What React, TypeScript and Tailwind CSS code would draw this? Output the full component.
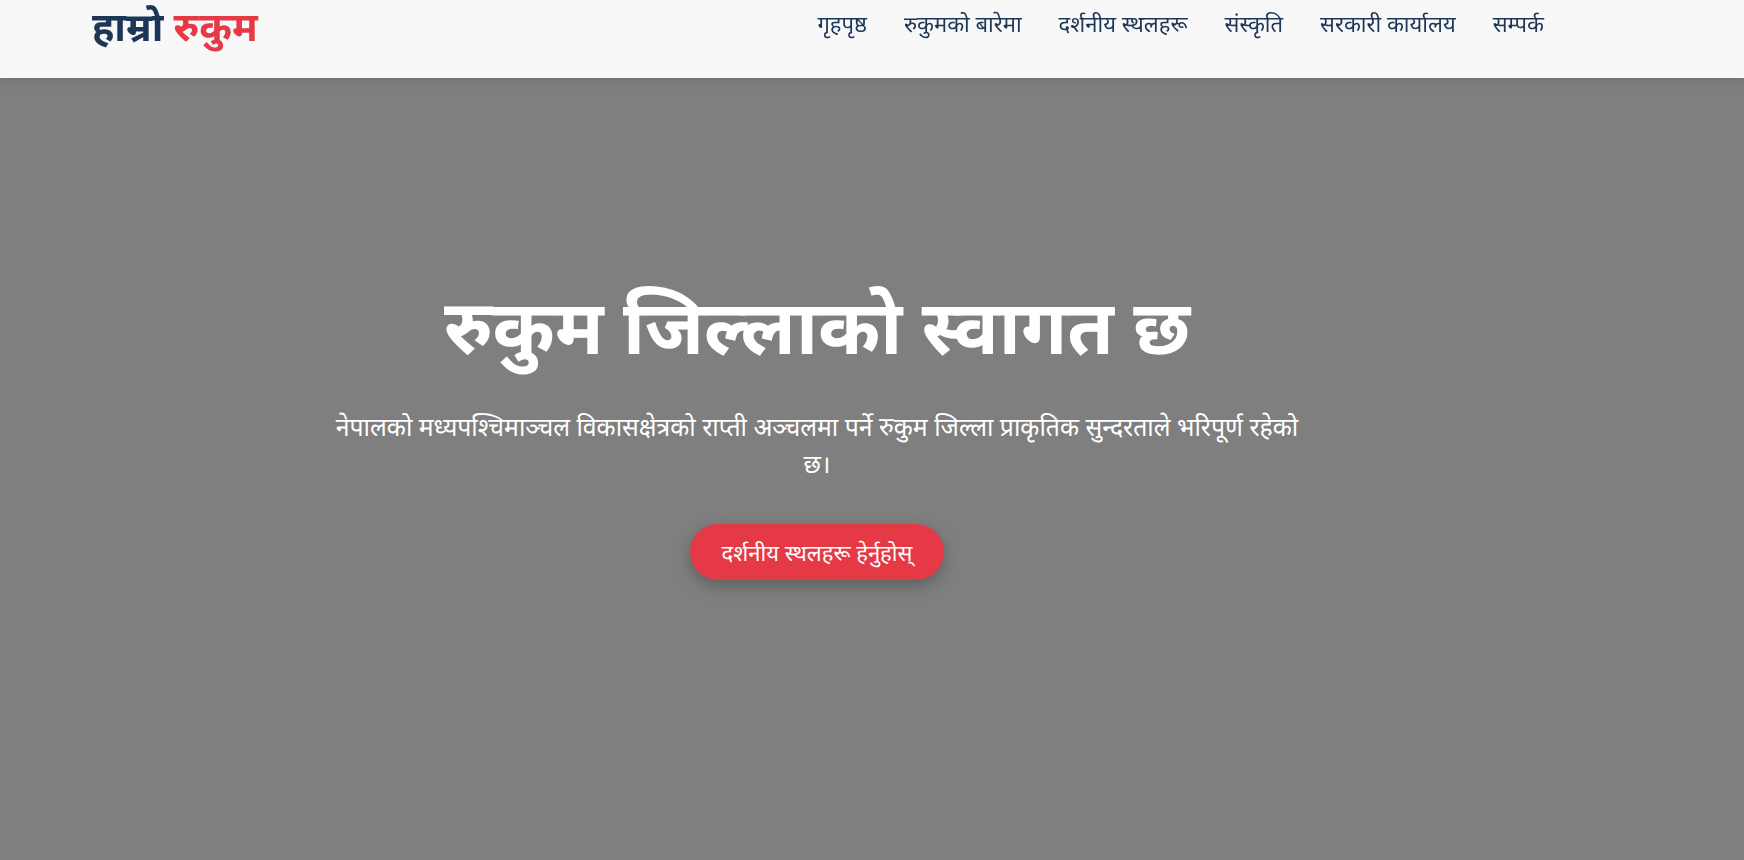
import React from "react";

const navItems = ["गृहपृष्ठ", "रुकुमको बारेमा", "दर्शनीय स्थलहरू", "संस्कृति", "सरकारी कार्यालय", "सम्पर्क"];

export default function App() {
  return (
    <div className="relative min-h-screen bg-[#7f7f7f]" style={{ fontFamily: '"Noto Sans", sans-serif' }}>
      <header className="fixed top-0 left-0 right-0 z-10 h-[78px] bg-[#f8f8f8] shadow-[0_2px_10px_rgba(0,0,0,0.12)]">
        <div className="flex w-[1636px] items-start justify-between px-[92px]">
          <a className="text-[39.5px] font-bold leading-[52px] text-[#1d3557]">
            हाम्रो <span className="text-[#e63946]">रुकुम</span>
          </a>
          <nav className="flex gap-[37px] pt-[1px]">
            {navItems.map((n) => (
              <a key={n} className="text-[22px] leading-[44px] text-[#1d3557]">
                {n}
              </a>
            ))}
          </nav>
        </div>
      </header>
      <section className="flex h-[860px] w-[1634px] flex-col items-center justify-center text-center text-white">
        <h1 className="text-[75px] font-bold leading-[1.2]">रुकुम जिल्लाको स्वागत छ</h1>
        <p className="mt-[38px] max-w-[972px] text-[24.8px] leading-[37px]">
          नेपालको मध्यपश्चिमाञ्चल विकासक्षेत्रको राप्ती अञ्चलमा पर्ने रुकुम जिल्ला प्राकृतिक सुन्दरताले भरिपूर्ण रहेको छ।
        </p>
        <a className="mt-[42px] flex h-[56px] items-center rounded-full bg-[#e63946] px-[32px] text-[22px] text-white shadow-[0_6px_16px_rgba(0,0,0,0.25)]">
          दर्शनीय स्थलहरू हेर्नुहोस्
        </a>
      </section>
    </div>
  );
}
